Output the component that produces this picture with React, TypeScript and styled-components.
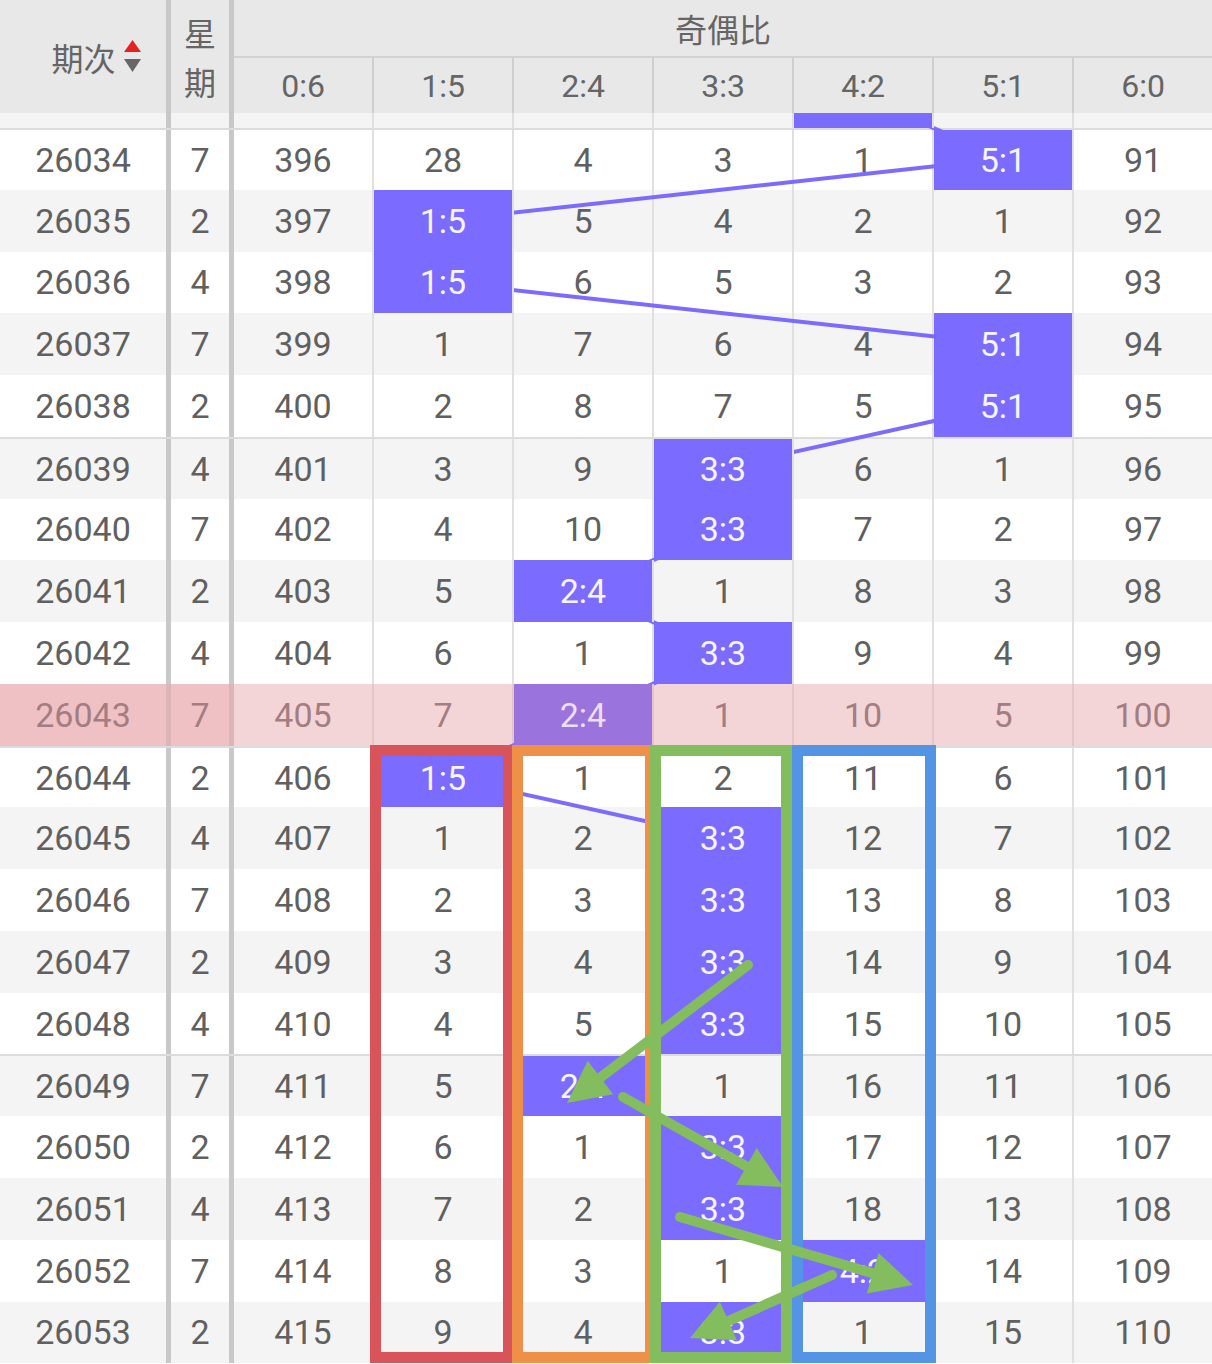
import React from "react";
import styled, { createGlobalStyle } from "styled-components";

const ROW_H = 61.78;
const PURPLE = "#7b6bff";
const GREEN = "#84bd5e";
const COLS = "171px 63px repeat(6, 140px) 1fr";

const GlobalStyle = createGlobalStyle`
  html, body { margin: 0; padding: 0; background: #ffffff; }
  body { font-family: Roboto, "Noto Sans CJK SC", sans-serif; }
`;

type RowData = { no: number; wk: number; hit: number; vals: number[]; current?: boolean; hidden?: boolean };

const mk = (no: number, wk: number, hit: number, vals: number[], current = false, hidden = false): RowData => ({
  no,
  wk,
  hit,
  vals,
  current,
  hidden,
});

const ROWS: RowData[] = [
  mk(26033, 4, 4, [395, 27, 3, 2, 0, 12, 90], false, true),
  mk(26034, 7, 5, [396, 28, 4, 3, 1, 0, 91]),
  mk(26035, 2, 1, [397, 0, 5, 4, 2, 1, 92]),
  mk(26036, 4, 1, [398, 0, 6, 5, 3, 2, 93]),
  mk(26037, 7, 5, [399, 1, 7, 6, 4, 0, 94]),
  mk(26038, 2, 5, [400, 2, 8, 7, 5, 0, 95]),
  mk(26039, 4, 3, [401, 3, 9, 0, 6, 1, 96]),
  mk(26040, 7, 3, [402, 4, 10, 0, 7, 2, 97]),
  mk(26041, 2, 2, [403, 5, 0, 1, 8, 3, 98]),
  mk(26042, 4, 3, [404, 6, 1, 0, 9, 4, 99]),
  mk(26043, 7, 2, [405, 7, 0, 1, 10, 5, 100], true),
  mk(26044, 2, 1, [406, 0, 1, 2, 11, 6, 101]),
  mk(26045, 4, 3, [407, 1, 2, 0, 12, 7, 102]),
  mk(26046, 7, 3, [408, 2, 3, 0, 13, 8, 103]),
  mk(26047, 2, 3, [409, 3, 4, 0, 14, 9, 104]),
  mk(26048, 4, 3, [410, 4, 5, 0, 15, 10, 105]),
  mk(26049, 7, 2, [411, 5, 0, 1, 16, 11, 106]),
  mk(26050, 2, 3, [412, 6, 1, 0, 17, 12, 107]),
  mk(26051, 4, 3, [413, 7, 2, 0, 18, 13, 108]),
  mk(26052, 7, 4, [414, 8, 3, 1, 0, 14, 109]),
  mk(26053, 2, 3, [415, 9, 4, 0, 1, 15, 110]),
];

const LABELS = ["0:6", "1:5", "2:4", "3:3", "4:2", "5:1", "6:0"];

const Page = styled.div`
  position: relative;
  width: 1212px;
  height: 1364px;
  overflow: hidden;
  background: #ffffff;
`;

const Header = styled.div`
  display: grid;
  grid-template-columns: ${COLS};
  grid-template-rows: 58px 55px;
  background: #e8e8e8;
  color: #656565;
  font-size: 32px;
`;

const PeriodHead = styled.div`
  grid-row: 1 / span 2;
  grid-column: 1;
  display: flex;
  align-items: center;
  justify-content: center;
  gap: 8px;
  padding-left: 26px;
  border-right: 5px solid #c8c8c8;
  font-family: "Noto Sans CJK SC", sans-serif;
`;

const WeekHead = styled.div`
  grid-row: 1 / span 2;
  grid-column: 2;
  display: flex;
  flex-direction: column;
  align-items: center;
  justify-content: center;
  line-height: 49px;
  border-right: 5px solid #c8c8c8;
  font-family: "Noto Sans CJK SC", sans-serif;
`;

const GroupHead = styled.div`
  grid-row: 1;
  grid-column: 3 / span 7;
  display: flex;
  align-items: center;
  justify-content: center;
  border-bottom: 2px solid #d2d2d2;
  font-family: "Noto Sans CJK SC", sans-serif;
`;

const SubHead = styled.div<{ $last: boolean }>`
  grid-row: 2;
  display: flex;
  align-items: center;
  justify-content: center;
  border-right: ${(p) => (p.$last ? "none" : "2px solid #cfcfcf")};
  font-family: Roboto, sans-serif;
`;

const Viewport = styled.div`
  position: relative;
  height: 1251px;
  overflow: hidden;
`;

const Scroller = styled.div`
  position: relative;
  margin-top: -46.8px;
`;

const BodyRow = styled.div<{ $stripe: boolean; $group: boolean; $current: boolean }>`
  display: grid;
  grid-template-columns: ${COLS};
  height: ${ROW_H}px;
  box-sizing: border-box;
  border-top: ${(p) => (p.$group ? "2px solid #dcdcdc" : "none")};
  background: ${(p) => (p.$current ? "#f3d5d8" : p.$stripe ? "#f4f4f4" : "#ffffff")};
  color: ${(p) => (p.$current ? "#a37d81" : "#606060")};
  font-size: 34px;
  font-family: Roboto, sans-serif;
`;

const KeyCell = styled.div<{ $current: boolean }>`
  display: flex;
  align-items: center;
  justify-content: center;
  border-right: 5px solid ${(p) => (p.$current ? "#dcb5b8" : "#c8c8c8")};
  background: ${(p) => (p.$current ? "#f0c1c4" : "transparent")};
`;

const ValueCell = styled.div<{ $hit: boolean; $current: boolean; $last: boolean }>`
  display: flex;
  align-items: center;
  justify-content: center;
  border-right: ${(p) => (p.$last ? "none" : `2px solid ${p.$current ? "#e6c5c8" : "#e0e0e0"}`)};
  ${(p) =>
    p.$hit
      ? `
    position: relative;
    z-index: 2;
    background-clip: padding-box;
    background-color: ${p.$current ? "#9b73dc" : PURPLE};
    color: ${p.$current ? "#ecdff2" : "#f6f4ff"};
  `
      : ""}
`;

const TrendSvg = styled.svg`
  position: absolute;
  top: 0;
  left: 0;
  z-index: 1;
  pointer-events: none;
`;

const Frame = styled.div<{ $left: number; $width: number; $color: string }>`
  position: absolute;
  top: 745px;
  left: ${(p) => p.$left}px;
  width: ${(p) => p.$width}px;
  height: 618px;
  box-sizing: border-box;
  border: 11px solid ${(p) => p.$color};
  z-index: 5;
  pointer-events: none;
`;

const ArrowSvg = styled.svg`
  position: absolute;
  top: 0;
  left: 0;
  z-index: 6;
  pointer-events: none;
`;

const colCenter = (c: number) => 234 + 140 * c + 69;
const rowCenter = (r: number) => r * ROW_H + ROW_H / 2;

function SortIcon() {
  return (
    <svg width="17" height="33" viewBox="0 0 17 33">
      <polygon points="8.5,0 17,12 0,12" fill="#e8201f" />
      <polygon points="0,19 17,19 8.5,32" fill="#666666" />
    </svg>
  );
}

type ArrowDef = [number, number, number, number];

const ARROWS: ArrowDef[] = [
  [748, 965, 567, 1103],
  [623, 1097, 783, 1187],
  [680, 1217, 913, 1285],
  [832, 1275, 690, 1338],
];

function Arrow({ a }: { a: ArrowDef }) {
  const [x1, y1, x2, y2] = a;
  const dx = x2 - x1;
  const dy = y2 - y1;
  const L = Math.hypot(dx, dy);
  const ux = dx / L;
  const uy = dy / L;
  const head = 42;
  const half = 21;
  const bx = x2 - ux * head;
  const by = y2 - uy * head;
  const px = -uy;
  const py = ux;
  const pts = `${x2},${y2} ${bx + px * half},${by + py * half} ${bx - px * half},${by - py * half}`;
  return (
    <g>
      <line
        x1={x1}
        y1={y1}
        x2={bx + ux * 4}
        y2={by + uy * 4}
        stroke={GREEN}
        strokeWidth={10}
        strokeLinecap="round"
      />
      <polygon points={pts} fill={GREEN} />
    </g>
  );
}

export default function App() {
  const trend = ROWS.map((r, i) => `${colCenter(r.hit)},${rowCenter(i)}`).join(" ");
  const bodyH = ROWS.length * ROW_H;
  return (
    <Page>
      <GlobalStyle />
      <Header>
        <PeriodHead>
          <span>期次</span>
          <SortIcon />
        </PeriodHead>
        <WeekHead>
          <span>星</span>
          <span>期</span>
        </WeekHead>
        <GroupHead>奇偶比</GroupHead>
        {LABELS.map((l, i) => (
          <SubHead key={l} $last={i === LABELS.length - 1}>
            {l}
          </SubHead>
        ))}
      </Header>
      <Viewport>
        <Scroller>
          <TrendSvg width={1212} height={bodyH} viewBox={`0 0 1212 ${bodyH}`}>
            <polyline points={trend} fill="none" stroke={PURPLE} strokeWidth={4} strokeLinejoin="round" />
          </TrendSvg>
          {ROWS.map((r) => {
            const off = r.no - 26034;
            const cur = !!r.current;
            const show = !r.hidden;
            return (
              <BodyRow
                key={r.no}
                $stripe={Math.abs(off) % 2 === 1}
                $group={off >= 0 && off % 5 === 0}
                $current={cur}
              >
                <KeyCell $current={cur}>{show ? r.no : null}</KeyCell>
                <KeyCell $current={cur}>{show ? r.wk : null}</KeyCell>
                {r.vals.map((v, c) => (
                  <ValueCell key={c} $hit={c === r.hit} $current={cur} $last={c === 6}>
                    {show ? (c === r.hit ? LABELS[c] : v) : null}
                  </ValueCell>
                ))}
              </BodyRow>
            );
          })}
        </Scroller>
      </Viewport>
      <Frame $left={370} $width={144} $color="#d9545a" />
      <Frame $left={512} $width={144} $color="#ee9048" />
      <Frame $left={650} $width={142} $color={GREEN} />
      <Frame $left={792} $width={144} $color="#5394e4" />
      <ArrowSvg width={1212} height={1364} viewBox="0 0 1212 1364">
        {ARROWS.map((a, i) => (
          <Arrow key={i} a={a} />
        ))}
      </ArrowSvg>
    </Page>
  );
}
